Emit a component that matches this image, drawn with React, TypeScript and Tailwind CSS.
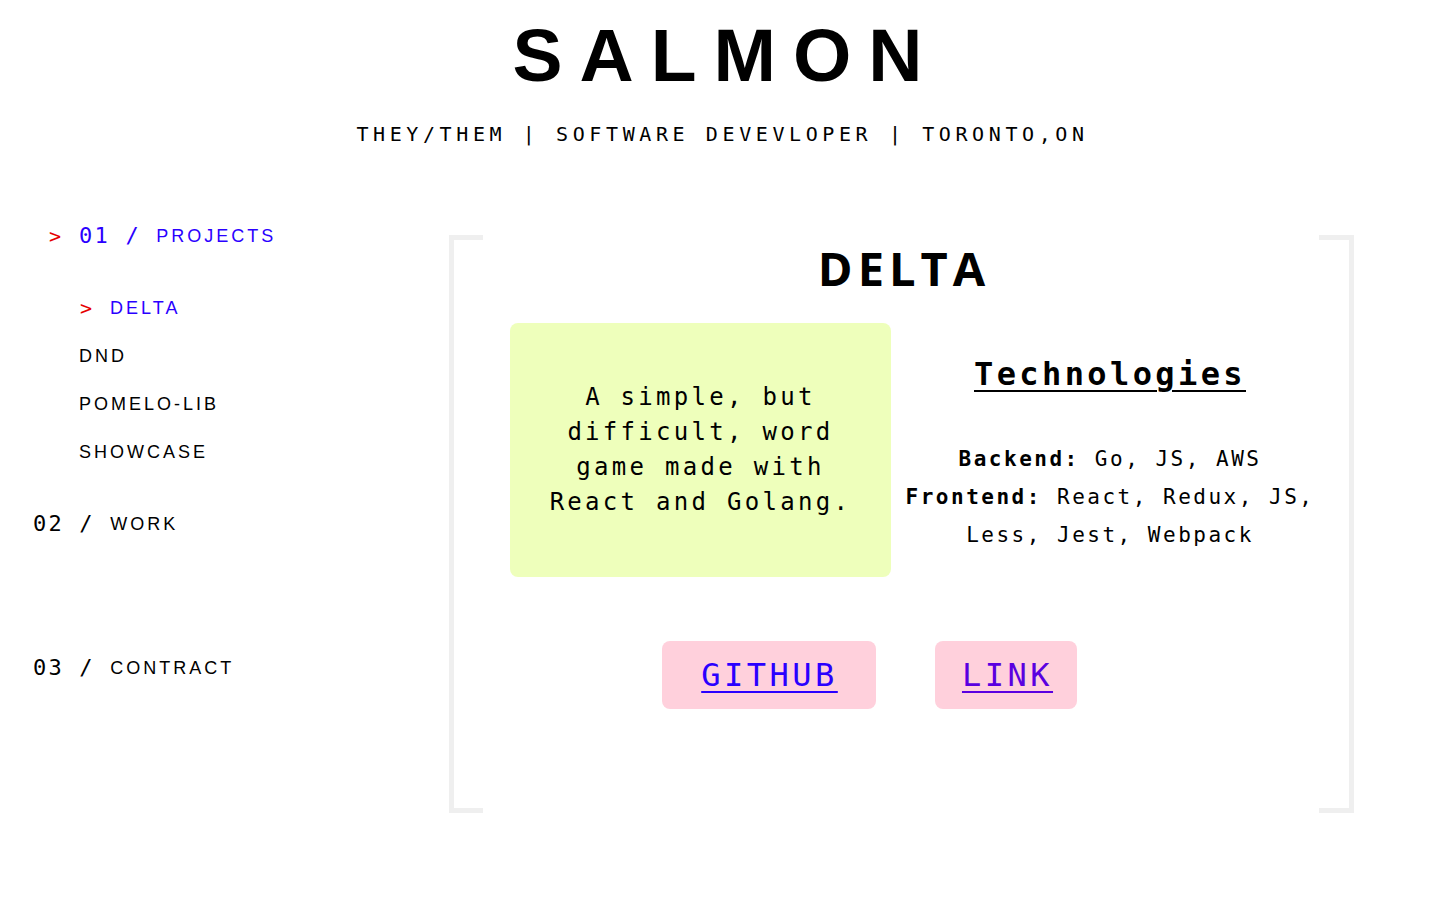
const mono = "font-['DejaVu_Sans_Mono','Liberation_Mono',monospace]";
const sans = "font-['Liberation_Sans',Arial,sans-serif]";

const NavRow = ({ active, num, label, sub, className = "" }: { active?: boolean; num?: string; label: string; sub?: boolean; className?: string }) => (
  <div className={`flex h-[24px] items-center ${className}`}>
    {active && <span className={`${mono} text-[20px] leading-none text-[#e60000] ${sub ? "ml-[47px] mr-[18px]" : "ml-[16px] mr-[18px]"}`}>&gt;</span>}
    {!active && sub && <span className="w-[46px]" />}
    {num && (
      <span className={`${mono} text-[22px] leading-none tracking-[2.2px] whitespace-pre ${active ? "text-[#2a00ff]" : "text-black"}`}>
        {num + " / "}
      </span>
    )}
    <span className={`${sans} text-[18px] leading-none tracking-[3px] ${active ? "text-[#2a00ff]" : "text-black"}`}>{label}</span>
  </div>
);

export default function App() {
  return (
    <div className="min-h-[900px] w-full bg-white text-black">
      <header className="flex flex-col items-center pt-[18px]">
        <h1 className={`${sans} pl-[12px] text-[75px] font-bold leading-none tracking-[17px]`}>SALMON</h1>
        <p className={`${mono} mt-[31px] pl-[5px] text-[20px] leading-none tracking-[4.6px] whitespace-pre`}>
          THEY/THEM | SOFTWARE DEVEVLOPER | TORONTO,ON
        </p>
      </header>

      <main className="mt-[80px] flex">
        <nav className="w-[449px] pl-[33px]">
          <NavRow active num="01" label="PROJECTS" />
          <NavRow active sub label="DELTA" className="mt-[48px]" />
          <NavRow sub label="DND" className="mt-[24px]" />
          <NavRow sub label="POMELO-LIB" className="mt-[24px]" />
          <NavRow sub label="SHOWCASE" className="mt-[24px]" />
          <NavRow num="02" label="WORK" className="mt-[48px]" />
          <NavRow num="03" label="CONTRACT" className="mt-[120px]" />
        </nav>

        <section className="relative mt-[11px] flex h-[578px] w-[905px] flex-col border-x-[5px] border-[#efefef]">
          <span className="absolute left-0 top-0 h-[5px] w-[29px] bg-[#efefef]" />
          <span className="absolute bottom-0 left-0 h-[5px] w-[29px] bg-[#efefef]" />
          <span className="absolute right-0 top-0 h-[5px] w-[30px] bg-[#efefef]" />
          <span className="absolute bottom-0 right-0 h-[5px] w-[30px] bg-[#efefef]" />

          <h2 className="mt-[10px] pl-[5px] text-center font-['Open_Sans',Arial,sans-serif] text-[47px] font-bold leading-none tracking-[5px]">
            DELTA
          </h2>

          <div className="mt-[31px] flex items-center">
            <div className="ml-[56px] flex h-[254px] w-[381px] items-center justify-center rounded-lg bg-[#eeffbb] px-8">
              <p className={`${mono} text-center text-[24px] leading-[35px] tracking-[3.3px]`}>
                A simple, but difficult, word game made with React and Golang.
              </p>
            </div>
            <div className="flex w-[438px] flex-col items-center pt-[6px] text-center">
              <h3 className={`${mono} text-[32px] font-bold leading-[44px] tracking-[3.4px] underline decoration-2 underline-offset-[5px]`}>
                Technologies
              </h3>
              <p className={`${mono} mt-[44px] text-[21px] leading-[38px] tracking-[2.5px]`}>
                <b>Backend:</b> Go, JS, AWS
                <br />
                <b>Frontend:</b> React, Redux, JS, Less, Jest, Webpack
              </p>
            </div>
          </div>

          <div className="ml-[208px] mt-[64px] flex gap-[59px]">
            <a href="#" className={`${mono} flex h-[68px] w-[214px] items-center justify-center rounded-lg bg-[#ffd0dc] pl-[1px] text-[32px] leading-none tracking-[3.5px] text-[#2a00ff] underline decoration-2 underline-offset-[5px]`}>
              GITHUB
            </a>
            <a href="#" className={`${mono} flex h-[68px] w-[142px] items-center justify-center rounded-lg bg-[#ffd0dc] pl-[3px] text-[32px] leading-none tracking-[3.5px] text-[#5a00e0] underline decoration-2 underline-offset-[5px]`}>
              LINK
            </a>
          </div>
        </section>
      </main>
    </div>
  );
}
